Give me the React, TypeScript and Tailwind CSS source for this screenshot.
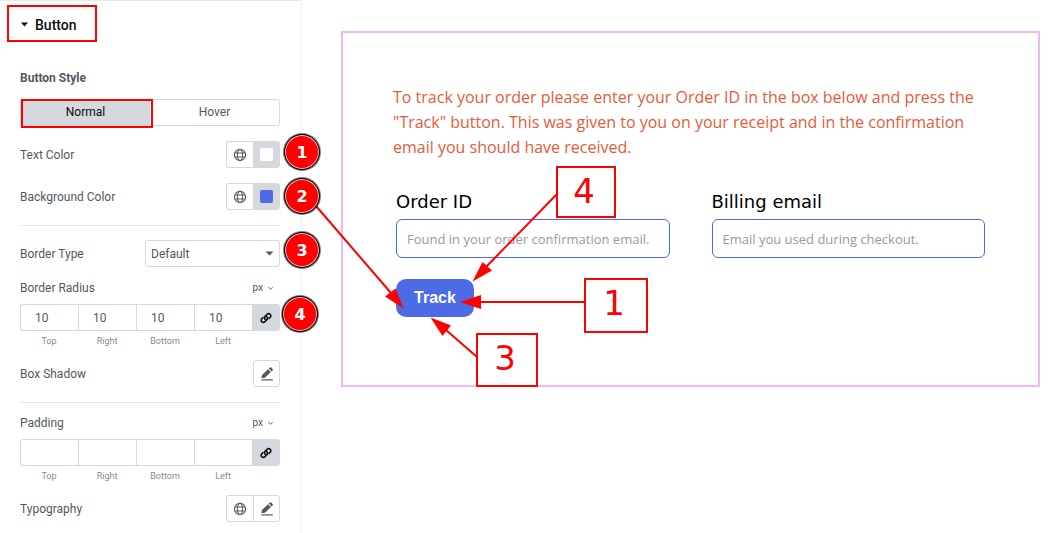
import React, { useState } from 'react';

const SIDES = ['Top', 'Right', 'Bottom', 'Left'];

function GlobeIcon() {
  return (
    <svg width="14" height="14" viewBox="0 0 14 14" fill="none" stroke="currentColor" aria-hidden="true">
      <circle cx="7" cy="7" r="5.6" strokeWidth="1.1" />
      <ellipse cx="7" cy="7" rx="2.6" ry="5.6" strokeWidth="1" />
      <path d="M1.8 5h10.4M1.8 9h10.4" strokeWidth="1" />
    </svg>
  );
}

function PencilIcon() {
  return (
    <svg width="14" height="14" viewBox="0 0 14 14" fill="currentColor" aria-hidden="true">
      <path d="M1.4 11.2 2 7.9 8 2.2 10.9 5.1 4.9 10.8Z" />
      <path d="M8.8 1.6 9.8.6q.7-.6 1.4 0l1.4 1.4q.6.7 0 1.4l-1 1Z" />
      <path d="M1.4 12.3h11.4v1.2H1.4Z" />
    </svg>
  );
}

function LinkIcon() {
  return (
    <svg width="12" height="12" viewBox="0 0 12 12" fill="none" stroke="currentColor" strokeWidth="1.6" strokeLinecap="round" aria-hidden="true">
      <path d="M5.2 7.4a2.1 2.1 0 0 1-.1-3l2-2.1a2.1 2.1 0 0 1 3.1 0 2.1 2.1 0 0 1 0 3L9 6.5" />
      <path d="M6.8 4.6a2.1 2.1 0 0 1 .1 3l-2 2.1a2.1 2.1 0 0 1-3.1 0 2.1 2.1 0 0 1 0-3L3 5.5" />
    </svg>
  );
}

function UnitButton() {
  return (
    <button type="button" className="flex items-center gap-1 pr-1.5 text-[10px] leading-4">
      px
      <svg width="7" height="5" viewBox="0 0 7 5" fill="none" stroke="currentColor" aria-hidden="true">
        <path d="M1.3 1.2l2.2 2 2.2-2" />
      </svg>
    </button>
  );
}

function ColorRow({ label, swatch }: { label: string; swatch: string }) {
  return (
    <div className="flex h-[27px] items-center justify-between">
      <span>{label}</span>
      <div className="flex h-[27px]">
        <button
          type="button"
          aria-label={`${label} global`}
          className="flex w-[27px] items-center justify-center rounded-l-[3px] border border-r-0 border-[#d5d8dc]"
        >
          <GlobeIcon />
        </button>
        <button
          type="button"
          aria-label={label}
          className="flex w-[27px] items-center justify-center rounded-r-[3px] bg-[#d5d8dc]"
        >
          <span className={`h-[13px] w-[13px] rounded-[2px] ${swatch}`} />
        </button>
      </div>
    </div>
  );
}

function Dimensions({ label, initial }: { label: string; initial: string }) {
  const [values, setValues] = useState(SIDES.map(() => initial));
  const [linked, setLinked] = useState(true);

  const handleChange = (index: number, value: string) => {
    setValues(values.map((v, i) => (linked || i === index ? value : v)));
  };

  return (
    <div>
      <div className="mb-2 flex h-4 items-center justify-between">
        <span>{label}</span>
        <UnitButton />
      </div>
      <div className="flex">
        <div className="grid flex-1 grid-cols-4">
          {SIDES.map((side, i) => (
            <label key={side} className="flex flex-col gap-1">
              <input
                type="text"
                value={values[i]}
                onChange={(e) => handleChange(i, e.target.value)}
                className={`h-[27px] w-full border border-r-0 border-[#d5d8dc] pl-[14px] text-xs outline-none ${
                  i === 0 ? 'rounded-l-[3px]' : ''
                }`}
              />
              <span className="text-center text-[9px] leading-3 text-[#818a96]">{side}</span>
            </label>
          ))}
        </div>
        <button
          type="button"
          aria-label="Link values together"
          aria-pressed={linked}
          onClick={() => setLinked(!linked)}
          className="flex h-[27px] w-7 items-center justify-center rounded-r-[3px] bg-[#d5d8dc] text-[#0c0d0e]"
        >
          <LinkIcon />
        </button>
      </div>
    </div>
  );
}

function StylePanel() {
  const [tab, setTab] = useState('Normal');

  return (
    <aside className="min-h-screen w-[302px] shrink-0 border-t border-r-2 border-t-[#e6e8ea] border-r-[#f5f8f9] pb-[10px] font-['Roboto',sans-serif] text-xs text-[#515962]">
      <div className="relative flex h-[47px] items-center px-5">
        <button type="button" className="flex items-center gap-[6px] text-sm font-medium text-[#0c0d0e]">
          <svg width="9" height="5" viewBox="0 0 9 5" fill="currentColor" aria-hidden="true">
            <path d="M1 .5h7L4.5 4.5Z" />
          </svg>
          Button
        </button>
        <div className="pointer-events-none absolute top-1 left-[7px] h-[37px] w-[90px] border-2 border-[#ff0000]" />
      </div>

      <div className="px-5 pt-[22px]">
        <h2 className="mb-[13px] leading-4 font-bold">Button Style</h2>
        <div className="relative mb-[15px] flex h-[27px] rounded-[3px] border border-[#d5d8dc]">
          {['Normal', 'Hover'].map((name) => (
            <button
              key={name}
              type="button"
              onClick={() => setTab(name)}
              className={`flex-1 pb-0.5 ${tab === name ? 'bg-[#d5d8dc] text-[#0c0d0e]' : ''}`}
            >
              {name}
            </button>
          ))}
          <div className="pointer-events-none absolute -top-px left-0 h-[29px] w-[132px] border-2 border-[#ff0000]" />
        </div>

        <div className="flex flex-col gap-[15px]">
          <ColorRow label="Text Color" swatch="bg-white" />
          <ColorRow label="Background Color" swatch="bg-[#4d6be5]" />
        </div>

        <hr className="mt-[15px] mb-[14px] border-[#e6e8ea]" />

        <div className="mb-[13px] flex h-[27px] items-center justify-between">
          <label htmlFor="border-type">Border Type</label>
          <div className="relative">
            <select
              id="border-type"
              className="h-[27px] w-[135px] appearance-none rounded-[3px] border border-[#d5d8dc] bg-white pl-[5px] text-xs"
            >
              <option>Default</option>
              <option>None</option>
              <option>Solid</option>
              <option>Dashed</option>
            </select>
            <svg
              width="9"
              height="5"
              viewBox="0 0 9 5"
              fill="currentColor"
              aria-hidden="true"
              className="pointer-events-none absolute top-[11px] right-[6px]"
            >
              <path d="M.5.5h8L4.5 4.5Z" />
            </svg>
          </div>
        </div>

        <Dimensions label="Border Radius" initial="10" />

        <div className="mt-[13px] flex h-[27px] items-center justify-between">
          <span>Box Shadow</span>
          <button
            type="button"
            aria-label="Edit box shadow"
            className="flex h-[27px] w-[27px] items-center justify-center rounded-[3px] border border-[#d5d8dc]"
          >
            <PencilIcon />
          </button>
        </div>

        <hr className="mt-[15px] mb-3 border-[#e6e8ea]" />

        <Dimensions label="Padding" initial="" />

        <div className="mt-[13px] flex h-[27px] items-center justify-between">
          <span>Typography</span>
          <div className="flex h-[27px]">
            <button
              type="button"
              aria-label="Global typography"
              className="flex w-[27px] items-center justify-center rounded-l-[3px] border border-r-0 border-[#d5d8dc]"
            >
              <GlobeIcon />
            </button>
            <button
              type="button"
              aria-label="Edit typography"
              className="flex w-[27px] items-center justify-center rounded-r-[3px] border border-[#d5d8dc]"
            >
              <PencilIcon />
            </button>
          </div>
        </div>
      </div>
    </aside>
  );
}

function TrackingForm() {
  const fieldClass =
    "h-[39px] w-full rounded-[6px] border border-[#4d6be5] px-[10px] font-['Open_Sans',sans-serif] text-[13px] outline-none placeholder:text-[#9a9a9a]";

  return (
    <main className="mt-[31px] mr-[9px] ml-[39px] min-w-0 flex-1 self-start border-2 border-[#f0b8fb] px-[50px] pt-[52px] pb-[68px]">
      <p className="font-['Open_Sans',sans-serif] text-base leading-[25px] text-[#e9593a]">
        To track your order please enter your Order ID in the box below and press the "Track" button. This was given to
        you on your receipt and in the confirmation email you should have received.
      </p>
      <form className="mt-[30px] px-[3px]" onSubmit={(e: React.FormEvent) => e.preventDefault()}>
        <div className="grid grid-cols-2 gap-[42px]">
          <div>
            <label htmlFor="order-id" className="mb-[5px] block font-['DejaVu_Sans',sans-serif] text-lg leading-6 text-black">
              Order ID
            </label>
            <input id="order-id" type="text" placeholder="Found in your order confirmation email." className={fieldClass} />
          </div>
          <div>
            <label htmlFor="billing-email" className="mb-[5px] block font-['DejaVu_Sans',sans-serif] text-lg leading-6 text-black">
              Billing email
            </label>
            <input id="billing-email" type="email" placeholder="Email you used during checkout." className={fieldClass} />
          </div>
        </div>
        <button
          type="submit"
          className="mt-[21px] block h-[38px] w-[78px] rounded-[10px] bg-[#4d6be5] font-['Liberation_Sans',sans-serif] text-base font-bold text-white"
        >
          Track
        </button>
      </form>
    </main>
  );
}

const badgeClass =
  'absolute flex h-9 w-9 items-center justify-center rounded-full border border-black bg-[#ff0000] pt-0.5 text-base font-bold text-white ring-1 ring-black/50 inset-ring inset-ring-[#d8c8c8]';
const boxClass = 'absolute flex justify-center border-2 border-[#ff0000] bg-white pr-1 text-[34px] leading-[47px] text-[#ff0000]';

// Numbered notes that tie the panel controls to the parts of the button
function Annotations() {
  return (
    <div className="pointer-events-none absolute top-0 left-0 font-['DejaVu_Sans',sans-serif]">
      <svg width="700" height="400" viewBox="0 0 700 400" className="absolute top-0 left-0 max-w-none" aria-hidden="true">
        <g stroke="#ff0000" strokeWidth="2">
          <path d="M316 206 391 293M557 194 486 267M585 302H480M477 357 446 330" />
        </g>
        <g fill="#ff0000">
          <path d="M403.5 308.5 385 296.5 395.5 288.5Z" />
          <path d="M472.5 281.5 482.5 262 492 270.5Z" />
          <path d="M460 302 481 295V309Z" />
          <path d="M430.5 317.5 451 325.5 442.5 336Z" />
        </g>
      </svg>
      <span className={`${badgeClass} top-[134px] left-[284px]`}>1</span>
      <span className={`${badgeClass} top-[178px] left-[284px]`}>2</span>
      <span className={`${badgeClass} top-[232px] left-[284px]`}>3</span>
      <span className={`${badgeClass} top-[296px] left-[282px]`}>4</span>
      <span className={`${boxClass} top-[166px] left-[556px] h-[52px] w-[60px]`}>4</span>
      <span className={`${boxClass} top-[278px] left-[584px] h-[55px] w-[64px]`}>1</span>
      <span className={`${boxClass} top-[333px] left-[476px] h-[54px] w-[62px]`}>3</span>
    </div>
  );
}

export default function App() {
  return (
    <div className="relative flex min-h-screen bg-white">
      <StylePanel />
      <TrackingForm />
      <Annotations />
    </div>
  );
}
